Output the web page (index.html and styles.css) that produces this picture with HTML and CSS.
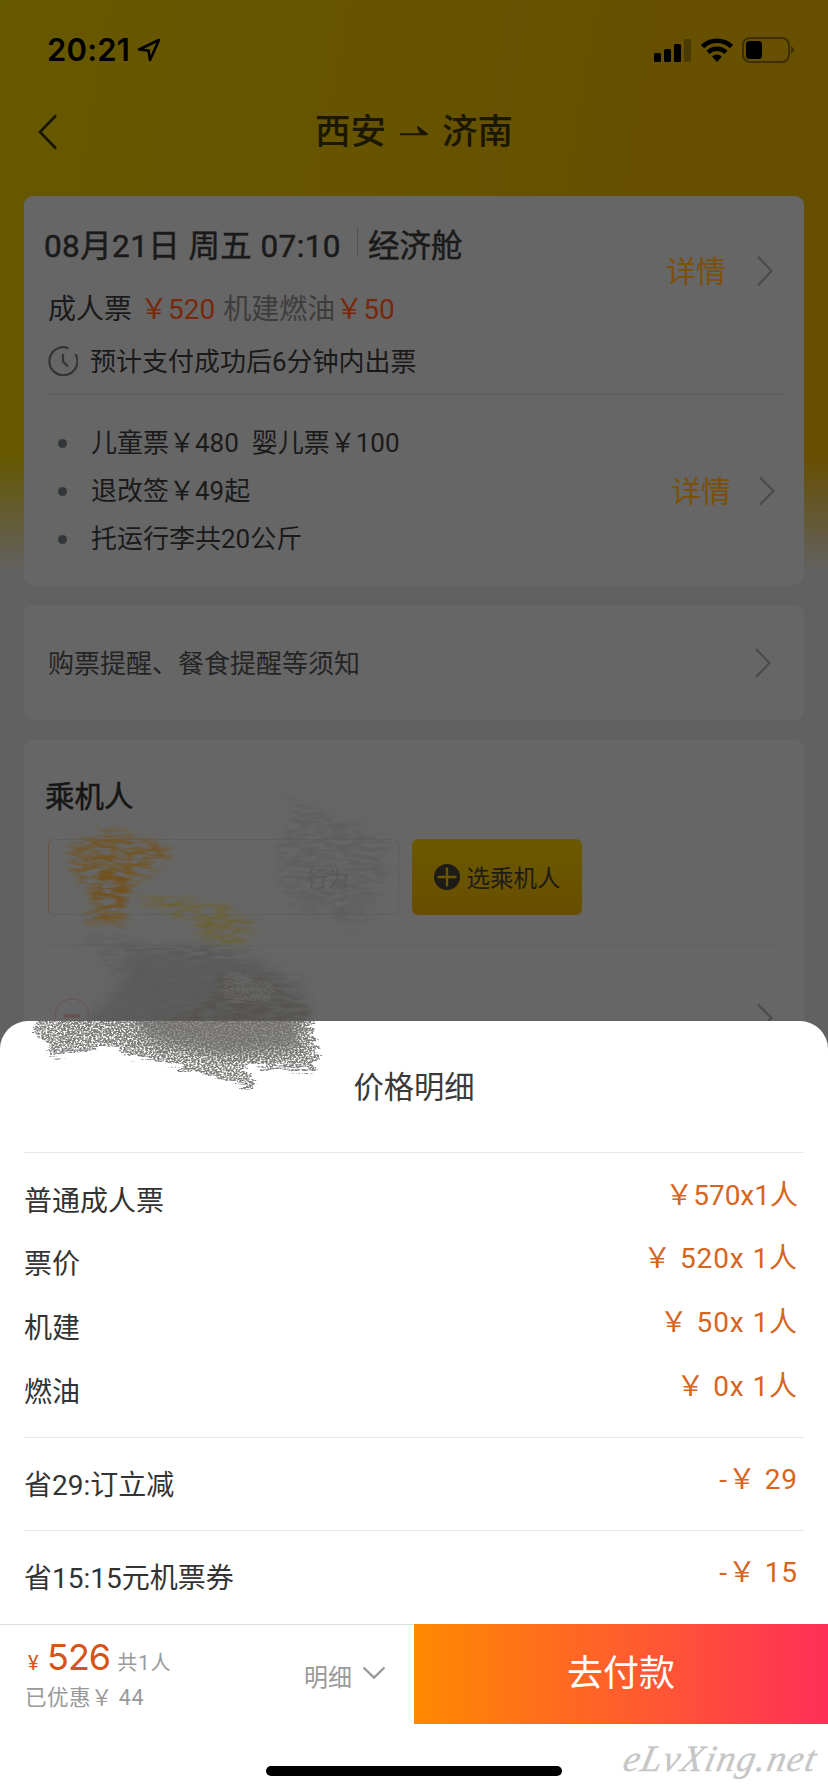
FILE: index.html
```html
<!DOCTYPE html>
<html lang="zh-CN">
<head>
<meta charset="utf-8">
<title>价格明细</title>
<link rel="stylesheet" href="styles.css">
</head>
<body>
<div class="screen">
  <header class="status">
    <span class="time">20:21</span>
    <svg class="locate" width="24" height="24" viewBox="0 0 24 24"><path d="M22 2 L2 11.5 L11.5 12.5 L13 22 Z" fill="none" stroke="#000" stroke-width="2.6" stroke-linejoin="round"/></svg>
    <div class="status-icons">
      <svg width="38" height="24" viewBox="0 0 38 24"><rect x="0" y="15" width="7" height="9" rx="1.5"/><rect x="10" y="11" width="7" height="13" rx="1.5"/><rect x="20" y="6" width="7" height="18" rx="1.5"/><rect x="30" y="1" width="7" height="23" rx="1.5" fill="#493b00"/></svg>
      <svg width="32" height="24" viewBox="0 0 32 24"><path d="M1.5 8.5 A21 21 0 0 1 30.5 8.5" fill="none" stroke="#000" stroke-width="4.6"/><path d="M7 14.3 A13 13 0 0 1 25 14.3" fill="none" stroke="#000" stroke-width="4.4"/><path d="M11 18.4 Q16 14.4 21 18.4 L16 24 Z"/></svg>
      <svg width="53" height="26" viewBox="0 0 53 26"><rect x="1" y="1" width="46" height="24" rx="7" fill="none" stroke="#3c3000" stroke-width="2"/><rect x="4" y="4" width="16" height="18" rx="3.5"/><path d="M49 9 Q55 13 49 17 Z" fill="#3c3000"/></svg>
    </div>
  </header>
  <nav class="nav">
    <svg class="back" width="20" height="36" viewBox="0 0 20 36"><path d="M18 1.5 L2 18 L18 34.5" fill="none" stroke="#171400" stroke-width="2.6"/></svg>
    <h1 class="route"><span>西安</span><svg width="30" height="12" viewBox="0 0 30 12"><path d="M1 8.2 H28 L19 1.2 L22.5 8" fill="#1b1700" stroke="#1b1700" stroke-width="2" stroke-linejoin="round"/></svg><span>济南</span></h1>
  </nav>

  <main class="cards">
    <section class="card flight">
      <div class="top">
        <div class="summary">
          <div class="line when"><span class="date">08月21日 周五 07:10</span><i class="bar"></i><span class="cabin">经济舱</span></div>
          <div class="line fare"><span>成人票</span><b class="adult">￥520</b><em>机建燃油</em><b>￥50</b></div>
          <div class="line eta"><svg width="30" height="30" viewBox="0 0 30 30"><path d="M20.5 2.2 A14 14 0 1 0 27.5 8.2" fill="none" stroke="#343434" stroke-width="2.2"/><path d="M15 8 V15.5 L20 20.5" fill="none" stroke="#343434" stroke-width="2.2"/></svg><span>预计支付成功后6分钟内出票</span></div>
        </div>
        <a class="more more-top"><span>详情</span><svg width="16" height="32" viewBox="0 0 16 32"><path d="M1 1.5 L14.5 16 L1 30.5"/></svg></a>
      </div>
      <div class="rules">
        <ul class="list">
          <li>儿童票￥480&nbsp; 婴儿票￥100</li>
          <li>退改签￥49起</li>
          <li>托运行李共20公斤</li>
        </ul>
        <a class="more more-rules"><span>详情</span><svg width="16" height="30" viewBox="0 0 16 30"><path d="M1 1.5 L14.5 15 L1 28.5"/></svg></a>
      </div>
    </section>

    <section class="card notice">
      <span>购票提醒、餐食提醒等须知</span>
      <svg class="chev" width="16" height="30" viewBox="0 0 16 30"><path d="M1 1 L14.5 15 L1 29"/></svg>
    </section>

    <section class="card people">
      <h2>乘机人</h2>
      <div class="pick">
        <div class="person"><span>行为</span></div>
        <button class="add"><svg width="26" height="26" viewBox="0 0 26 26"><circle cx="13" cy="13" r="13" fill="#1d1b17"/><path d="M13 3.5 V22.5 M3.5 13 H22.5" stroke="#6b5700" stroke-width="2.4"/></svg><span>选乘机人</span></button>
      </div>
      <div class="guest">
        <svg width="36" height="36" viewBox="0 0 36 36"><circle cx="18" cy="18" r="17" fill="none" stroke="#6b5050" stroke-width="1"/><path d="M10 18 H26" stroke="#6b4e4e" stroke-width="3"/></svg>
        <svg class="chev" width="16" height="30" viewBox="0 0 16 30"><path d="M1 1.5 L14.5 15 L1 28.5"/></svg>
      </div>
    </section>
  </main>

  <div class="sheet">
    <h3>价格明细</h3>
    <div class="group base">
      <div class="row first"><span>普通成人票</span><b>￥570x1人</b></div>
      <div class="row"><span>票价</span><b>￥ 520x 1人</b></div>
      <div class="row"><span>机建</span><b>￥ 50x 1人</b></div>
      <div class="row"><span>燃油</span><b>￥ 0x 1人</b></div>
    </div>
    <div class="group save"><div class="row"><span>省29:订立减</span><b>-￥ 29</b></div></div>
    <div class="group save last"><div class="row"><span>省15:15元机票券</span><b>-￥ 15</b></div></div>
    <footer class="pay">
      <div class="total">
        <div class="sum"><small>¥</small><strong>526</strong><span>共1人</span></div>
        <div class="off">已优惠￥ 44</div>
      </div>
      <div class="toggle"><span>明细</span><svg width="24" height="14" viewBox="0 0 24 14"><path d="M1.5 1.5 L12 11.5 L22.5 1.5" fill="none" stroke="#999" stroke-width="2.4"/></svg></div>
      <button class="go">去付款</button>
    </footer>
    <div class="home"></div>
    <div class="mark">eLvXing.net</div>
  </div>

  <svg class="scribble" width="440" height="310" viewBox="0 790 440 310">
    <defs>
      <filter id="chalk" x="-10%" y="-10%" width="120%" height="120%">
        <feTurbulence type="fractalNoise" baseFrequency=".04 .3" numOctaves="2" seed="4" result="w"/>
        <feDisplacementMap in="SourceGraphic" in2="w" scale="18" xChannelSelector="R" yChannelSelector="G" result="d"/>
        <feTurbulence type="fractalNoise" baseFrequency=".5 .6" numOctaves="2" seed="9"/>
        <feColorMatrix values="0 0 0 0 0  0 0 0 0 0  0 0 0 0 0  0 4 0 0 -1.35" result="g"/>
        <feComposite in="d" in2="g" operator="in"/>
      </filter>
      <filter id="faint" x="-10%" y="-10%" width="120%" height="120%">
        <feTurbulence type="fractalNoise" baseFrequency=".03 .2" numOctaves="3" seed="2" result="w"/>
        <feDisplacementMap in="SourceGraphic" in2="w" scale="28" xChannelSelector="R" yChannelSelector="G" result="d"/>
        <feGaussianBlur in="d" stdDeviation="3" result="s"/>
        <feTurbulence type="fractalNoise" baseFrequency=".06 .25" numOctaves="5" seed="7"/>
        <feColorMatrix values="0 0 0 0 0  0 0 0 0 0  0 0 0 0 0  0 3 0 0 -.95" result="g"/>
        <feComposite in="s" in2="g" operator="in"/>
      </filter>
      <filter id="soft" x="-10%" y="-10%" width="120%" height="120%"><feGaussianBlur stdDeviation="7"/></filter>
      <clipPath id="above"><rect x="0" y="790" width="440" height="231"/></clipPath>
      <clipPath id="below"><rect x="0" y="1021" width="440" height="80"/></clipPath>
    </defs>
    <g clip-path="url(#above)">
      <path d="M288 800 L385 835 L385 880 L360 930 L285 905 L280 860 Z" fill="#5c5c5c" opacity=".7" filter="url(#faint)"/>
      <path d="M68 842 L115 832 L178 848 L143 880 L125 895 L128 922 L88 922 L95 895 L76 880 Z" fill="#744f10" opacity=".7" filter="url(#faint)"/>
      <path d="M95 875 L125 875 L126 905 L95 908 Z" fill="#744a0c" opacity=".5" filter="url(#faint)"/>
      <path d="M130 895 L215 903 L252 922 L243 948 L205 940 L170 912 Z" fill="#6c602c" opacity=".75" filter="url(#faint)"/>
      <path d="M130 950 L260 965 L300 990 L305 1040 L60 1040 L120 990 Z" fill="#5c5c5b" opacity=".8" filter="url(#soft)"/>
      <path d="M80 935 L250 955 L305 980 L310 1030 L90 1030 L120 980 Z" fill="#595959" opacity=".5" filter="url(#faint)"/>
      <path d="M110 938 L250 955 L245 970 L210 962 Z" fill="#54565a" opacity=".8" filter="url(#faint)"/>
      <path d="M220 975 L265 975 L305 1005 L310 1030 L150 1030 L205 1000 Z" fill="#54514a" opacity=".7" filter="url(#faint)"/>
      <path d="M225 972 L262 978 L282 992 L262 1004 L222 998 Z" fill="#7a7974" opacity=".35" filter="url(#chalk)"/>
    </g>
    <g clip-path="url(#below)">
      <path d="M36 1000 H318 L312 1032 L320 1056 L310 1073 L245 1065 L256 1084 L250 1090 L200 1072 L140 1058 L103 1047 L50 1057 L46 1040 L35 1034 Z" fill="#7b7b79" filter="url(#chalk)"/>
      <path d="M60 1008 H305 L308 1056 L240 1062 L150 1050 L108 1038 L60 1042 Z" fill="#777672" opacity=".5" filter="url(#chalk)"/>
      <path d="M120 1000 H300 L298 1050 L225 1056 L150 1042 Z" fill="#6f6e6b" opacity=".75" filter="url(#soft)"/>
    </g>
  </svg>
</div>
</body>
</html>
```
FILE: styles.css
```css
* { box-sizing: border-box; }
body { margin: 0; }
h1, h2, h3, ul { margin: 0; padding: 0; font-weight: 400; }
em, i, b { font-style: normal; font-weight: 400; }
button { border: 0; padding: 0; font: inherit; }
svg { display: block; flex: none; }

.screen {
  position: relative;
  width: 828px;
  height: 1792px;
  overflow: hidden;
  white-space: nowrap;
  font-family: Roboto, "Noto Sans CJK SC", sans-serif;
  color: #1a1a1a;
  background:
    linear-gradient(180deg, transparent 455px, #616161 572px),
    linear-gradient(100deg, #665800 0, #665200 45%, #684c00 100%);
}

.status { display: flex; align-items: center; height: 99px; padding: 0 33px 0 47px; }
.time { width: 85px; font: 600 31px/40px Inter, sans-serif; color: #000; letter-spacing: .2px; }
.locate { margin-left: 5px; }
.status-icons { display: flex; align-items: center; gap: 9px; margin-left: auto; }

.nav { display: grid; grid-template-columns: 38px 1fr 38px; align-items: center; height: 66px; }
.back { margin-left: 38px; }
.route { display: flex; justify-content: center; align-items: center; gap: 13px; font-size: 35.5px; line-height: 50px; font-weight: 500; color: #1b1700; }

.cards { display: flex; flex-direction: column; gap: 20px; padding: 31px 24px 0; }
.card { background: #666; border-radius: 9px; }

.flight { height: 389px; padding: 20px 22px 0 24px; }
.top { display: flex; justify-content: space-between; height: 179px; border-bottom: 2px solid #606060; }
.line { display: flex; align-items: center; }
.line span, .line b, .line em { margin-top: -3px; }
.when { height: 60px; margin-left: -4px; font-size: 31.5px; color: #1a1a1a; }
.when .date, .when .cabin { margin-top: -6px; -webkit-text-stroke: .5px #1a1a1a; }
.date { letter-spacing: .4px; }
.bar { width: 1px; height: 28px; margin: -8px 10px 0 16px; background: #505050; }
.fare { height: 64px; font-size: 28px; }
.fare b { color: #78290b; }
.fare .adult { margin-left: 8px; }
.fare em { margin-left: 8px; color: #3d3d3d; }
.eta { height: 42px; gap: 13px; font-size: 26px; }
.eta span { margin-top: -4px; margin-left: -1px; }

.more { display: flex; align-items: center; gap: 31px; font-size: 30px; color: #7c5008; }
.more span { margin-top: -4px; }
.more path, .chev path { fill: none; stroke: #4a4a4a; stroke-width: 2; }
.more-top { height: 60px; margin: 25px 9px 0 0; }
.rules { display: flex; justify-content: space-between; align-items: flex-start; padding-top: 24px; }
.list { list-style: none; font-size: 26px; line-height: 48px; }
.list li { display: flex; align-items: center; }
.list li::before { content: ""; width: 9px; height: 9px; margin: 0 24px 0 10px; border-radius: 50%; background: #33373b; }
.more-rules { height: 144px; margin-right: 7px; gap: 28px; }

.notice { display: flex; align-items: center; justify-content: space-between; height: 115px; padding: 0 33px 0 24px; font-size: 26px; color: #242424; }
.notice span { margin-top: -2px; }

.people { height: 330px; padding: 28px 24px 0; }
.people h2 { height: 71px; margin-left: -3px; font-size: 29.5px; line-height: 58px; -webkit-text-stroke: .5px #151515; color: #151515; }
.pick { display: flex; gap: 13px; height: 107px; border-bottom: 1px solid #5f5f5f; }
.person { display: flex; align-items: center; justify-content: flex-end; width: 351px; height: 76px; padding-right: 49px; border: 1px solid #5e5e5e; border-left-color: #6b533a; border-radius: 6px; font-size: 21px; color: #565656; }
.add { display: flex; align-items: center; justify-content: center; gap: 7px; width: 170px; height: 76px; border-radius: 6px; font-size: 23.5px; color: #1d1b17; background: linear-gradient(180deg, #6a5900, #684e00); }
.guest { display: flex; align-items: flex-start; justify-content: space-between; padding: 52px 7px 0 6px; }
.guest .chev { margin-top: 5px; }

.sheet {
  position: absolute;
  left: 0;
  right: 0;
  top: 1021px;
  bottom: 0;
  border-radius: 28px 28px 0 0;
  background: #fff;
  color: #333;
}
.sheet h3 { height: 131px; font-size: 30.3px; line-height: 134px; text-align: center; color: #3a3a3a; }
.group { margin: 0 24px; border-top: 1px solid #e8e8e8; }
.base { height: 285px; padding-top: 16px; }
.save { height: 93px; padding-top: 15px; }
.last { height: 94px; }
.row { display: flex; justify-content: space-between; height: 64px; font-size: 28px; line-height: 66px; }
.row b { color: #d6651f; letter-spacing: .9px; line-height: 53px; margin-right: 6px; }
.first b { letter-spacing: 0; }
.first { height: 63px; }

.pay { display: flex; height: 100px; }
.total, .toggle { border-top: 1px solid #ddd; }
.total { width: 300px; padding: 10px 0 0 25px; }
.sum { display: flex; align-items: baseline; height: 46px; line-height: 44px; color: #999; }
.sum small { width: 22px; padding-left: 3px; font-size: 20px; color: #d6541a; }
.sum strong { font: 400 36px/44px Inter, sans-serif; letter-spacing: -1px; color: #d6541a; }
.sum span { margin-left: 7px; font-size: 20px; letter-spacing: 1px; }
.off { font-size: 21.5px; line-height: 34px; color: #999; letter-spacing: .5px; }
.toggle { display: flex; align-items: center; gap: 10px; width: 114px; padding: 2px 0 0 4px; font-size: 24px; color: #999; }
.toggle svg { margin-top: -6px; }
.go { flex: 1; height: 100px; font-size: 36px; line-height: 98px; color: #fff; background: linear-gradient(90deg, #ff8900, #ff5a30 55%, #ff2f58); }
.home { width: 296px; height: 10px; margin: 42px auto 0; border-radius: 5px; background: #000; }
.mark { position: absolute; right: 11px; bottom: 11px; font: italic 37px/44px "Liberation Serif", serif; letter-spacing: 1.4px; color: #c6c6c6; transform: skewX(-12deg); -webkit-text-stroke: .3px #c6c6c6; }
.scribble { position: absolute; left: 0; top: 790px; pointer-events: none; }
```
